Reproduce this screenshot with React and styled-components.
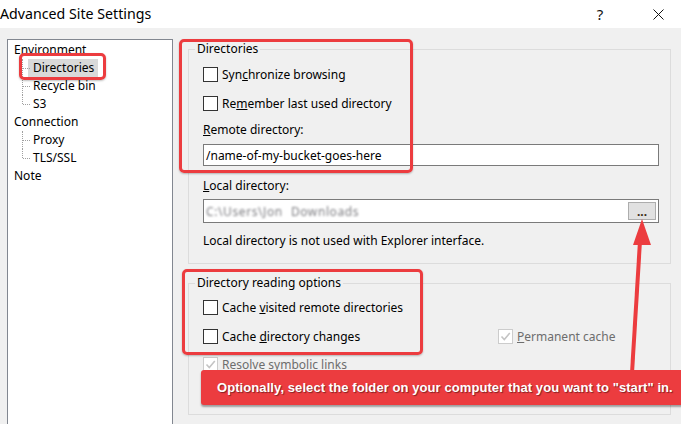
import React from "react";
import styled, { createGlobalStyle } from "styled-components";

const GlobalStyle = createGlobalStyle`
  html, body {
    margin: 0;
    padding: 0;
  }
  body {
    background: #f0f0f0;
    font-family: "Noto Sans", "Segoe UI", sans-serif;
    font-size: 12px;
    color: #000;
    overflow: hidden;
  }
`;

const RED = "#ec3c3f";

function App() {
  return (
    <>
      <GlobalStyle />
      <Window>
        <TitleBar>
          <Title>Advanced Site Settings</Title>
          <TitleButton>?</TitleButton>
          <TitleButton>
            <svg width="11" height="11" viewBox="0 0 11 11">
              <path d="M0.5 0.5 L10.5 10.5 M10.5 0.5 L0.5 10.5" stroke="#111" strokeWidth="1" />
            </svg>
          </TitleButton>
        </TitleBar>

        <Body>
          <Tree>
            <TreeItem>Environment</TreeItem>
            <TreeItem child>
              <Selected>Directories</Selected>
            </TreeItem>
            <TreeItem child>Recycle bin</TreeItem>
            <TreeItem child last>S3</TreeItem>
            <TreeItem>Connection</TreeItem>
            <TreeItem child>Proxy</TreeItem>
            <TreeItem child last>TLS/SSL</TreeItem>
            <TreeItem>Note</TreeItem>
          </Tree>

          <Panel>
            <Group>
              <Legend>Directories</Legend>
              <GroupInner>
                <CheckRow>
                  <Box />
                  <span>Syn<u>c</u>hronize browsing</span>
                </CheckRow>
                <CheckRow gap={9}>
                  <Box />
                  <span>Re<u>m</u>ember last used directory</span>
                </CheckRow>
                <Label gap={9}><u>R</u>emote directory:</Label>
                <Field gap={6} h={22}>/name-of-my-bucket-goes-here</Field>
                <Label gap={12}><u>L</u>ocal directory:</Label>
                <Field gap={5} h={24}>
                  <Blurred>
                    <span>C:\Users\Jon</span>
                    <span>Downloads</span>
                  </Blurred>
                  <BrowseButton>...</BrowseButton>
                </Field>
                <Note>Local directory is not used with Explorer interface.</Note>
              </GroupInner>
            </Group>

            <Group gap={11}>
              <Legend>Directory reading options</Legend>
              <GroupInner second>
                <CheckRow>
                  <Box />
                  <span>Cache <u>v</u>isited remote directories</span>
                </CheckRow>
                <CheckRow gap={9}>
                  <CheckCell>
                    <Box />
                    <span>Cache <u>d</u>irectory changes</span>
                  </CheckCell>
                  <CheckCell disabled>
                    <Box disabled>
                      <Tick />
                    </Box>
                    <span><u>P</u>ermanent cache</span>
                  </CheckCell>
                </CheckRow>
                <CheckRow gap={8} disabled>
                  <Box disabled>
                    <Tick />
                  </Box>
                  <span>Resolve symbolic links</span>
                </CheckRow>
              </GroupInner>
            </Group>
          </Panel>
        </Body>

        <Highlight x={179} y={39} w={234} h={134} />
        <Highlight x={182} y={269} w={241} h={86} />
        <Highlight x={19} y={53} w={87} h={27} />

        <Arrow width="60" height="170" viewBox="0 0 60 170">
          <line x1="32" y1="162" x2="40" y2="30" stroke={RED} strokeWidth="4" />
          <polygon points="42,8 33,34 51,34" fill={RED} />
        </Arrow>

        <Callout>Optionally, select the folder on your computer that you want to "start" in.</Callout>
      </Window>
    </>
  );
}

export default App;

function Tick() {
  return (
    <svg width="11" height="11" viewBox="0 0 11 11">
      <path d="M1.5 5.5 L4.3 8.5 L9.8 2" fill="none" stroke="#c4c4c4" strokeWidth="1.6" />
    </svg>
  );
}

const Window = styled.div`
  position: relative;
  width: 681px;
  height: 424px;
  overflow: hidden;
  background: #f0f0f0;
`;

const TitleBar = styled.div`
  height: 28px;
  background: #fff;
  display: flex;
  align-items: center;
`;

const Title = styled.div`
  flex: 1;
  font-size: 14.2px;
  color: #000;
  padding-bottom: 2px;
`;

const TitleButton = styled.div`
  width: 46px;
  height: 28px;
  display: flex;
  align-items: center;
  justify-content: center;
  font-size: 15px;
  color: #111;
  margin-left: 12px;
`;

const Body = styled.div`
  display: flex;
  padding: 11px 0 0 7px;
`;

const Tree = styled.div`
  width: 166px;
  height: 400px;
  box-sizing: border-box;
  border: 1px solid #828790;
  background: #fff;
  padding: 1px 0 0 6px;
  flex-shrink: 0;
`;

const TreeItem = styled.div`
  position: relative;
  height: 18px;
  line-height: 18px;
  padding-left: ${(p) => (p.child ? "19px" : "0")};
  white-space: nowrap;

  &::before {
    content: ${(p) => (p.child ? '""' : "none")};
    position: absolute;
    left: 8px;
    top: 0;
    height: ${(p) => (p.last ? "9px" : "18px")};
    border-left: 1px dotted #a0a0a0;
  }

  &::after {
    content: ${(p) => (p.child ? '""' : "none")};
    position: absolute;
    left: 9px;
    top: 9px;
    width: 7px;
    border-top: 1px dotted #a0a0a0;
  }
`;

const Selected = styled.span`
  display: inline-block;
  background: #d9d9d9;
  margin-left: -5px;
  padding: 0 4px 0 5px;
  height: 19px;
`;

const Panel = styled.div`
  width: 483px;
  margin-left: 15px;
  padding-top: 2px;
`;

const Group = styled.fieldset`
  margin: ${(p) => p.gap || 0}px 0 0 0;
  padding: 0;
  border: 1px solid #dcdcdc;
  min-width: 0;
`;

const Legend = styled.legend`
  margin-left: 6px;
  padding: 0 2px;
  line-height: 16px;
  font-size: 12px;
`;

const GroupInner = styled.div`
  padding: ${(p) => (p.second ? "6px 11px 40px 14px" : "7px 11px 14px 14px")};
`;

const CheckRow = styled.div`
  display: flex;
  align-items: center;
  height: 20px;
  gap: 4px;
  margin-top: ${(p) => p.gap || 0}px;
  color: ${(p) => (p.disabled ? "#6d6d6d" : "#000")};
  white-space: nowrap;
`;

const CheckCell = styled.div`
  display: flex;
  align-items: center;
  gap: 4px;
  width: ${(p) => (p.disabled ? "auto" : "291px")};
  color: ${(p) => (p.disabled ? "#6d6d6d" : "#000")};
`;

const Box = styled.span`
  width: 15px;
  height: 15px;
  box-sizing: border-box;
  border: 1px solid ${(p) => (p.disabled ? "#cccccc" : "#333")};
  background: #fff;
  display: flex;
  align-items: center;
  justify-content: center;
  flex-shrink: 0;
`;

const Label = styled.div`
  line-height: 16px;
  margin-top: ${(p) => p.gap || 0}px;
`;

const Field = styled.div`
  margin-top: ${(p) => p.gap || 0}px;
  height: ${(p) => p.h}px;
  box-sizing: border-box;
  border: 1px solid #7a7a7a;
  background: #fff;
  display: flex;
  align-items: center;
  justify-content: space-between;
  padding: 0 2px;
  width: 456px;
`;

const Blurred = styled.div`
  display: flex;
  gap: 8px;
  color: #7c7c80;
  filter: blur(1.3px);
  letter-spacing: 0.6px;
`;

const BrowseButton = styled.div`
  width: 28px;
  height: 18px;
  box-sizing: border-box;
  border: 1px solid #adadad;
  background: #e1e1e1;
  display: flex;
  align-items: flex-end;
  justify-content: center;
  line-height: 14px;
  font-weight: bold;
  color: #3a2a10;
`;

const Note = styled.div`
  margin-top: 10px;
  line-height: 16px;
`;

const Highlight = styled.div`
  position: absolute;
  left: ${(p) => p.x}px;
  top: ${(p) => p.y}px;
  width: ${(p) => p.w}px;
  height: ${(p) => p.h}px;
  box-sizing: border-box;
  border: 3px solid ${RED};
  border-radius: 5px;
  box-shadow: 0 1px 2px rgba(0, 0, 0, 0.25);
  pointer-events: none;
`;

const Arrow = styled.svg`
  position: absolute;
  left: 600px;
  top: 211px;
  overflow: visible;
`;

const Callout = styled.div`
  position: absolute;
  left: 201px;
  top: 370px;
  width: 490px;
  height: 35px;
  box-sizing: border-box;
  background: ${RED};
  border-radius: 3px 0 0 3px;
  box-shadow: 0 2px 2px rgba(0, 0, 0, 0.35);
  color: #fff;
  font-family: "Liberation Sans", Arial, sans-serif;
  font-weight: bold;
  font-size: 13px;
  letter-spacing: 0.08px;
  line-height: 35px;
  padding-left: 16px;
  white-space: nowrap;
  text-shadow: 1px 1px 1px rgba(0, 0, 0, 0.45);
`;
